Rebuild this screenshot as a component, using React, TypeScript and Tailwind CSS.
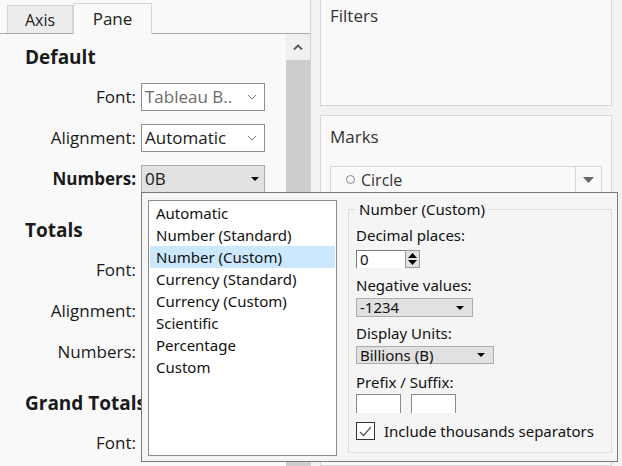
import React from 'react';

const leftFont = { fontFamily: '"Open Sans", Lato, sans-serif' };
const winFont = { fontFamily: '"Noto Sans", "DejaVu Sans", sans-serif' };

const Chevron = () => (
  <svg width="10" height="6" viewBox="0 0 10 6" className="ml-auto">
    <path d="M1 1 L5 5 L9 1" fill="none" stroke="#7a7a7a" strokeWidth="1" />
  </svg>
);

const Caret = ({ color = '#000' }: { color?: string }) => (
  <svg width="8" height="4" viewBox="0 0 8 4" className="ml-auto">
    <path d="M0 0 H8 L4 4 Z" fill={color} />
  </svg>
);

interface RowProps {
  label: string;
  bold?: boolean;
  children?: React.ReactNode;
}

const Row: React.FC<RowProps> = ({ label, bold, children }) => (
  <div className="flex h-[28px] items-center">
    <div
      className={`w-[136px] whitespace-nowrap text-right text-[17px] text-[#1a1a1a] ${bold ? 'font-bold' : ''}`}
    >
      {label}
    </div>
    <div className="ml-[5px]">{children}</div>
  </div>
);

const Heading = ({ children }: { children: React.ReactNode }) => (
  <div className="flex h-[28px] items-center whitespace-nowrap pl-[25px] text-[19px] font-bold text-[#1a1a1a]">
    {children}
  </div>
);

const formats = [
  'Automatic',
  'Number (Standard)',
  'Number (Custom)',
  'Currency (Standard)',
  'Currency (Custom)',
  'Scientific',
  'Percentage',
  'Custom',
];

export default function App() {
  return (
    <div className="relative flex h-[466px] w-[622px] overflow-hidden bg-[#f2f2f2]">
      {/* Left panel */}
      <div className="flex w-[311px] flex-col border-r border-[#cfcfcf] bg-[#f9f9f9]" style={leftFont}>
        {/* Tabs */}
        <div className="flex h-[34px] items-end border-b border-[#a9a9a9] pl-[7px]">
          <div className="flex h-[28px] w-[66px] items-center justify-center border border-b-0 border-[#d4d4d4] bg-[#ececec] text-[16px] text-[#222]">
            Axis
          </div>
          <div className="-mb-px flex h-[31px] w-[79px] items-center justify-center border border-b-0 border-[#d4d4d4] bg-[#f9f9f9] text-[17px] text-[#222]">
            Pane
          </div>
        </div>

        <div className="flex flex-1 overflow-hidden">
          <div className="flex flex-1 flex-col pt-[9px]">
            <Heading>Default</Heading>
            <div className="mt-[12px] flex flex-col gap-[13px]">
              <Row label="Font:">
                <div className="flex h-[28px] w-[124px] items-center border border-[#8e8e8e] bg-white pl-[3px] pr-[7px] text-[17px] text-[#6a6a6a]">
                  Tableau B..
                  <Chevron />
                </div>
              </Row>
              <Row label="Alignment:">
                <div className="flex h-[28px] w-[124px] items-center border border-[#8e8e8e] bg-white pl-[3px] pr-[7px] text-[17px] text-[#1a1a1a]">
                  Automatic
                  <Chevron />
                </div>
              </Row>
              <Row label="Numbers:" bold>
                <div className="flex h-[28px] w-[124px] items-center border border-[#adadad] bg-[#e1e1e1] pl-[3px] pr-[5px] text-[17px] text-[#1a1a1a]">
                  0B
                  <Caret />
                </div>
              </Row>
            </div>

            <div className="mt-[23px]">
              <Heading>Totals</Heading>
            </div>
            <div className="mt-[12px] flex flex-col gap-[13px]">
              <Row label="Font:" />
              <Row label="Alignment:" />
              <Row label="Numbers:" />
            </div>

            <div className="mt-[23px]">
              <Heading>Grand Totals</Heading>
            </div>
            <div className="mt-[12px] flex flex-col gap-[13px]">
              <Row label="Font:" />
            </div>
          </div>

          {/* Scrollbar */}
          <div className="flex w-[24px] flex-col bg-[#f0f0f0]">
            <div className="flex h-[26px] items-center justify-center">
              <svg width="10" height="6" viewBox="0 0 10 6">
                <path d="M1 5.5 L5 1.5 L9 5.5" fill="none" stroke="#555" strokeWidth="1.8" />
              </svg>
            </div>
            <div className="flex-1 bg-[#cdcdcd]" />
          </div>
        </div>
      </div>

      {/* Right area */}
      <div className="flex flex-1 flex-col pl-[9px] pr-[10px]" style={leftFont}>
        <div className="-mt-px h-[107px] border border-[#d6d6d6] bg-[#f9f9f9] pl-[9px] pt-[3px] text-[17px] text-[#333]">
          Filters
        </div>
        <div className="mt-[9px] flex-1 border border-[#d6d6d6] bg-[#f9f9f9] px-[9px] pt-[8px]">
          <div className="text-[17px] text-[#333]">Marks</div>
          <div className="mt-[16px] flex h-[28px] items-center border border-[#d6d6d6] bg-[#f9f9f9]">
            <div className="flex flex-1 items-center pl-[15px] text-[16px] text-[#333]">
              <span className="mr-[6px] inline-block h-[9px] w-[9px] rounded-full border border-[#888]" />
              Circle
            </div>
            <div className="flex h-full w-[26px] items-center justify-center border-l border-[#d6d6d6]">
              <svg width="11" height="6" viewBox="0 0 11 6">
                <path d="M0 0 H11 L5.5 6 Z" fill="#666" />
              </svg>
            </div>
          </div>
        </div>
      </div>

      {/* Number format popup */}
      <div
        className="absolute left-[141px] top-[192px] flex h-[270px] w-[477px] items-start border border-[#7a7a7a] bg-[#f5f5f5] pl-[6px]"
        style={winFont}
      >
        <div className="mt-[7px] h-[256px] w-[189px] border border-[#8a8a8a] bg-white p-[1px]">
          {formats.map((f) => (
            <div
              key={f}
              className={`flex h-[22px] items-center pl-[6px] text-[15px] text-[#111] ${
                f === 'Number (Custom)' ? 'bg-[#cce8ff]' : ''
              }`}
            >
              {f}
            </div>
          ))}
        </div>

        <div className="relative ml-[11px] mt-[16px] h-[244px] w-[264px] border border-[#dcdcdc] pl-[7px] text-[15px] text-[#111]">
          <span className="absolute -top-[12px] left-[6px] bg-[#f5f5f5] px-[4px]">Number (Custom)</span>

          <div className="mt-[15px] flex h-[20px] items-center">Decimal places:</div>
          <div className="mt-[5px] flex h-[18px] w-[64px] bg-white">
            <div className="flex flex-1 items-center border-l border-t border-[#7a7a7a] pl-[3px]">0</div>
            <div className="flex w-[15px] flex-col items-center justify-center gap-[2px] border border-[#9a9a9a] bg-[#e1e1e1]">
              <svg width="9" height="5" viewBox="0 0 9 5">
                <path d="M0 5 H9 L4.5 0 Z" fill="#000" />
              </svg>
              <svg width="9" height="5" viewBox="0 0 9 5">
                <path d="M0 0 H9 L4.5 5 Z" fill="#000" />
              </svg>
            </div>
          </div>

          <div className="mt-[7px] flex h-[20px] items-center">Negative values:</div>
          <div className="mt-[3px] flex h-[19px] w-[117px] items-center border border-[#adadad] bg-[#e1e1e1] pl-[3px] pr-[8px]">
            -1234
            <Caret />
          </div>

          <div className="mt-[6px] flex h-[20px] items-center">Display Units:</div>
          <div className="mt-[3px] flex h-[18px] w-[138px] items-center border border-[#adadad] bg-[#e1e1e1] pl-[3px] pr-[8px]">
            Billions (B)
            <Caret />
          </div>

          <div className="mt-[8px] flex h-[20px] items-center">Prefix / Suffix:</div>
          <div className="mt-[2px] flex gap-[10px]">
            <div className="h-[19px] w-[45px] border-x border-t border-[#8a8a8a] bg-white" />
            <div className="h-[19px] w-[45px] border-x border-t border-[#8a8a8a] bg-white" />
          </div>

          <div className="mt-[9px] flex h-[18px] items-center">
            <div className="flex h-[18px] w-[19px] items-center justify-center border border-[#333] bg-white">
              <svg width="13" height="11" viewBox="0 0 13 11">
                <path d="M1 6 L4.5 9.5 L12 1" fill="none" stroke="#555" strokeWidth="1.2" />
              </svg>
            </div>
            <span className="ml-[9px]">Include thousands separators</span>
          </div>
        </div>
      </div>
    </div>
  );
}
